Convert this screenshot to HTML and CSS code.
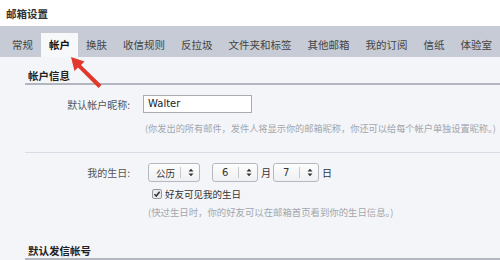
FILE: index.html
```html
<!DOCTYPE html>
<html lang="zh">
<head>
<meta charset="utf-8">
<title>邮箱设置</title>
<link rel="stylesheet" href="styles.css">
</head>
<body>
<div class="page">
  <div class="header">邮箱设置</div>
  <div class="tabs">
    <span class="tab">常规</span>
    <span class="tab active">帐户</span>
    <span class="tab">换肤</span>
    <span class="tab">收信规则</span>
    <span class="tab">反拉圾</span>
    <span class="tab">文件夹和标签</span>
    <span class="tab">其他邮箱</span>
    <span class="tab">我的订阅</span>
    <span class="tab">信纸</span>
    <span class="tab">体验室</span>
  </div>
  <div class="content">
    <div class="section-title">帐户信息</div>
    <div class="row row-nick">
      <span class="label">默认帐户昵称:</span>
      <span class="input">Walter</span>
    </div>
    <div class="hint hint-nick">(你发出的所有邮件，发件人将显示你的邮箱昵称，你还可以给每个帐户单独设置昵称。)</div>
    <div class="sep"></div>
    <div class="row row-bday">
      <span class="label">我的生日:</span>
      <span class="fields">
        <span class="select sel-cal"><span class="val">公历</span><span class="arr"><svg width="6" height="9" viewBox="0 0 6 9"><path d="M0.5 3.5 L3 0.8 L5.5 3.5 Z M0.5 5.5 L3 8.2 L5.5 5.5 Z" fill="#333"/></svg></span></span>
        <span class="select sel-num"><span class="val">6</span><span class="arr"><svg width="6" height="9" viewBox="0 0 6 9"><path d="M0.5 3.5 L3 0.8 L5.5 3.5 Z M0.5 5.5 L3 8.2 L5.5 5.5 Z" fill="#333"/></svg></span></span>
        <span class="unit">月</span>
        <span class="select sel-num"><span class="val">7</span><span class="arr"><svg width="6" height="9" viewBox="0 0 6 9"><path d="M0.5 3.5 L3 0.8 L5.5 3.5 Z M0.5 5.5 L3 8.2 L5.5 5.5 Z" fill="#333"/></svg></span></span>
        <span class="unit">日</span>
      </span>
    </div>
    <div class="check-row">
      <span class="checkbox"><svg width="8" height="8" viewBox="0 0 8 8"><path d="M1.5 4.2 L3.3 6 L6.6 1.8" fill="none" stroke="#333" stroke-width="1.5"/></svg></span>
      <span>好友可见我的生日</span>
    </div>
    <div class="hint hint-bday">(快过生日时，你的好友可以在邮箱首页看到你的生日信息。)</div>
    <div class="section-title section-2">默认发信帐号</div>
  </div>
  <svg class="arrow" width="110" height="100" viewBox="0 0 110 100">
    <path d="M71 57 L84.5 61.5 L81 65 L101.5 85 L98.5 88 L78 67.5 L74.5 71 Z" fill="#e2372c"/>
  </svg>
</div>
</body>
</html>
```
FILE: styles.css
```css
html, body {
  margin: 0;
  padding: 0;
  background: #f4f5f8;
}
.page {
  position: relative;
  width: 500px;
  height: 260px;
  overflow: hidden;
  font-family: "Noto Sans CJK SC", "Noto Sans", sans-serif;
  font-size: 10px;
  color: #333;
}
.header {
  height: 26px;
  line-height: 27px;
  padding-left: 6px;
  background: #ffffff;
  font-size: 10.5px;
  font-weight: bold;
  color: #333;
}
.tabs {
  display: flex;
  align-items: flex-end;
  height: 31px;
  padding-left: 4px;
  background: #c6cbd5;
  white-space: nowrap;
}
.tab {
  height: 24px;
  line-height: 24px;
  padding: 0 8px;
  font-size: 10.5px;
  color: #444;
}
.tab.active {
  background: #f7f8fa;
  color: #111;
  font-weight: bold;
}
.content {
  padding-left: 25px;
  white-space: nowrap;
}
.section-title {
  padding: 12px 0 0 3px;
  line-height: 14px;
  font-size: 10.5px;
  font-weight: bold;
  color: #222;
  border-bottom: 2px solid #b3b6be;
}
.section-2 {
  margin-top: 13px;
}
.row {
  display: flex;
  align-items: center;
}
.label {
  width: 105px;
  text-align: right;
  color: #555;
}
.row-nick {
  margin-top: 10px;
  height: 18px;
}
.input {
  margin-left: 13px;
  width: 103px;
  height: 16px;
  line-height: 16px;
  padding-left: 4px;
  background: #fff;
  border: 1px solid #a9acb3;
  font-family: "DejaVu Sans", sans-serif;
  font-size: 10px;
  color: #222;
}
.hint {
  line-height: 14px;
  font-size: 9.4px;
  color: #a3a6ad;
}
.hint-nick {
  margin-top: 8px;
  padding-left: 120px;
  font-size: 9.2px;
}
.sep {
  margin-top: 17px;
  border-top: 1px solid #d9dce5;
}
.row-bday {
  margin-top: 10px;
  height: 19px;
}
.fields {
  display: flex;
  align-items: center;
  margin-left: 18px;
}
.select {
  display: flex;
  align-items: center;
  justify-content: space-between;
  height: 17px;
  background: linear-gradient(#fdfdfd, #eff0f2);
  border: 1px solid #b5b8bf;
  border-radius: 3px;
  color: #333;
  font-size: 9.5px;
}
.sel-cal {
  width: 50px;
}
.sel-num {
  width: 44px;
  margin-left: 12px;
}
.sel-num + .unit + .sel-num {
  margin-left: 2px;
}
.val {
  padding-left: 7px;
}
.sel-num .val {
  padding-left: 9px;
  font-family: "DejaVu Sans", sans-serif;
  font-size: 10px;
}
.arr {
  display: flex;
  align-items: center;
  height: 11px;
  padding: 0 5px 0 7px;
  border-left: 1px solid #c6c8ce;
}
.unit {
  margin-left: 3px;
  font-size: 10px;
  color: #333;
}
.check-row {
  display: flex;
  align-items: center;
  margin-top: 5px;
  padding-left: 127px;
  line-height: 14px;
  font-size: 9.5px;
  color: #333;
}
.checkbox {
  display: flex;
  width: 8px;
  height: 8px;
  margin-right: 3px;
  border: 1px solid #999;
  border-radius: 2px;
  background: #e8e9ec;
}
.hint-bday {
  margin-top: 4px;
  padding-left: 123px;
}
.arrow {
  position: absolute;
  left: 0;
  top: 0;
}
```
